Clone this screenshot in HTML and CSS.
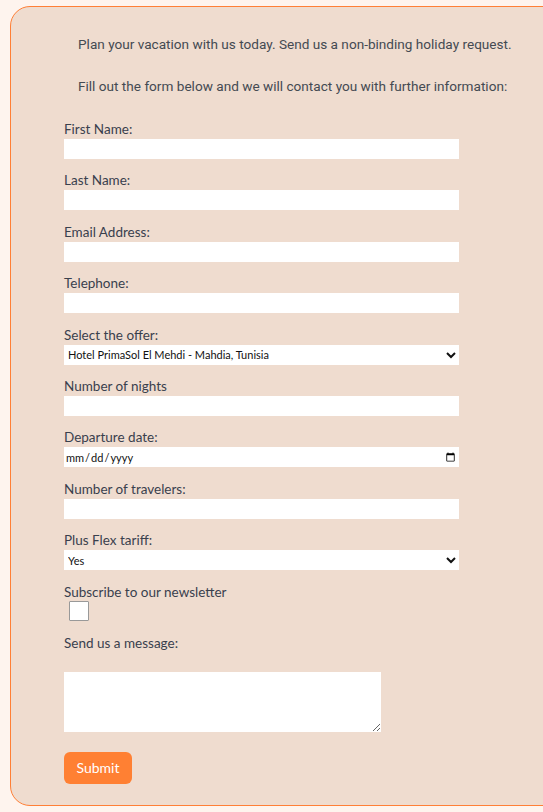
FILE: index.html
```html
<!DOCTYPE html>
<html lang="en">
<head>
<meta charset="utf-8">
<title>Holiday request</title>
<link rel="stylesheet" href="styles.css">
</head>
<body>
<div class="card">
  <p class="intro">Plan your vacation with us today. Send us a non-binding holiday request.</p>
  <p class="intro">Fill out the form below and we will contact you with further information:</p>
  <form class="form">
    <div class="field">
      <label class="label" for="fn">First Name:</label>
      <input class="input" id="fn" type="text">
    </div>
    <div class="field">
      <label class="label" for="ln">Last Name:</label>
      <input class="input" id="ln" type="text">
    </div>
    <div class="field">
      <label class="label" for="em">Email Address:</label>
      <input class="input" id="em" type="email">
    </div>
    <div class="field">
      <label class="label" for="tel">Telephone:</label>
      <input class="input" id="tel" type="tel">
    </div>
    <div class="field">
      <label class="label" for="offer">Select the offer:</label>
      <select class="input select" id="offer">
        <option>Hotel PrimaSol El Mehdi - Mahdia, Tunisia</option>
      </select>
    </div>
    <div class="field">
      <label class="label" for="nights">Number of nights</label>
      <input class="input" id="nights" type="text">
    </div>
    <div class="field">
      <label class="label" for="dep">Departure date:</label>
      <input class="input date" id="dep" type="date">
    </div>
    <div class="field">
      <label class="label" for="trav">Number of travelers:</label>
      <input class="input" id="trav" type="text">
    </div>
    <div class="field">
      <label class="label" for="flex">Plus Flex tariff:</label>
      <select class="input select" id="flex">
        <option>Yes</option>
      </select>
    </div>
    <div class="field">
      <label class="label" for="news">Subscribe to our newsletter</label>
      <input class="check" id="news" type="checkbox">
    </div>
    <div class="field">
      <label class="label" for="msg">Send us a message:</label>
      <textarea class="textarea" id="msg"></textarea>
    </div>
    <button class="submit" type="button">Submit</button>
  </form>
</div>
</body>
</html>
```

FILE: styles.css
```css
html, body {
  margin: 0;
  padding: 0;
  overflow: hidden;
}
body {
  background: #fef4ee;
  height: 812px;
}
.card {
  box-sizing: border-box;
  margin: 6px 0 0 10px;
  width: 560px;
  height: 800px;
  background: #efdccf;
  border: 1px solid #ff7f36;
  border-radius: 20px 0 0 20px;
  padding: 27px 0 0 53px;
}
.intro {
  font-family: Roboto, "Liberation Sans", sans-serif;
  font-size: 13.6px;
  line-height: 20px;
  color: #444a52;
  margin: 0 0 22px 14px;
}
.form {
  padding-top: 3px;
}
.field {
  display: flex;
  flex-direction: column;
  align-items: flex-start;
}
.label {
  font-family: Lato, "Noto Sans", sans-serif;
  font-size: 13.5px;
  line-height: 16px;
  color: #39404d;
  margin-bottom: 2px;
}
.input {
  box-sizing: border-box;
  width: 395px;
  height: 20px;
  border: none;
  background: #fff;
  margin: 0 0 13.4px 0;
  padding: 0 2px;
  font-family: Lato, "Noto Sans", sans-serif;
  font-size: 11px;
  color: #111;
  border-radius: 0;
  outline: none;
}
.select {
  padding: 0;
}
.date {
  padding: 0 1px;
}
.check {
  appearance: none;
  -webkit-appearance: none;
  box-sizing: border-box;
  width: 20px;
  height: 20px;
  background: #fff;
  border: 1px solid #999;
  border-radius: 1px;
  margin: -1px 0 14px 5px;
}
.textarea {
  box-sizing: border-box;
  width: 317px;
  height: 60px;
  border: none;
  background: #fff;
  margin: 19px 0 20px 0;
  resize: both;
}
.submit {
  display: block;
  width: 68px;
  height: 32px;
  border: none;
  border-radius: 6px;
  background: #ff8033;
  color: #fff;
  font-family: Lato, "Noto Sans", sans-serif;
  font-size: 14px;
  padding: 0;
  cursor: pointer;
}
```
